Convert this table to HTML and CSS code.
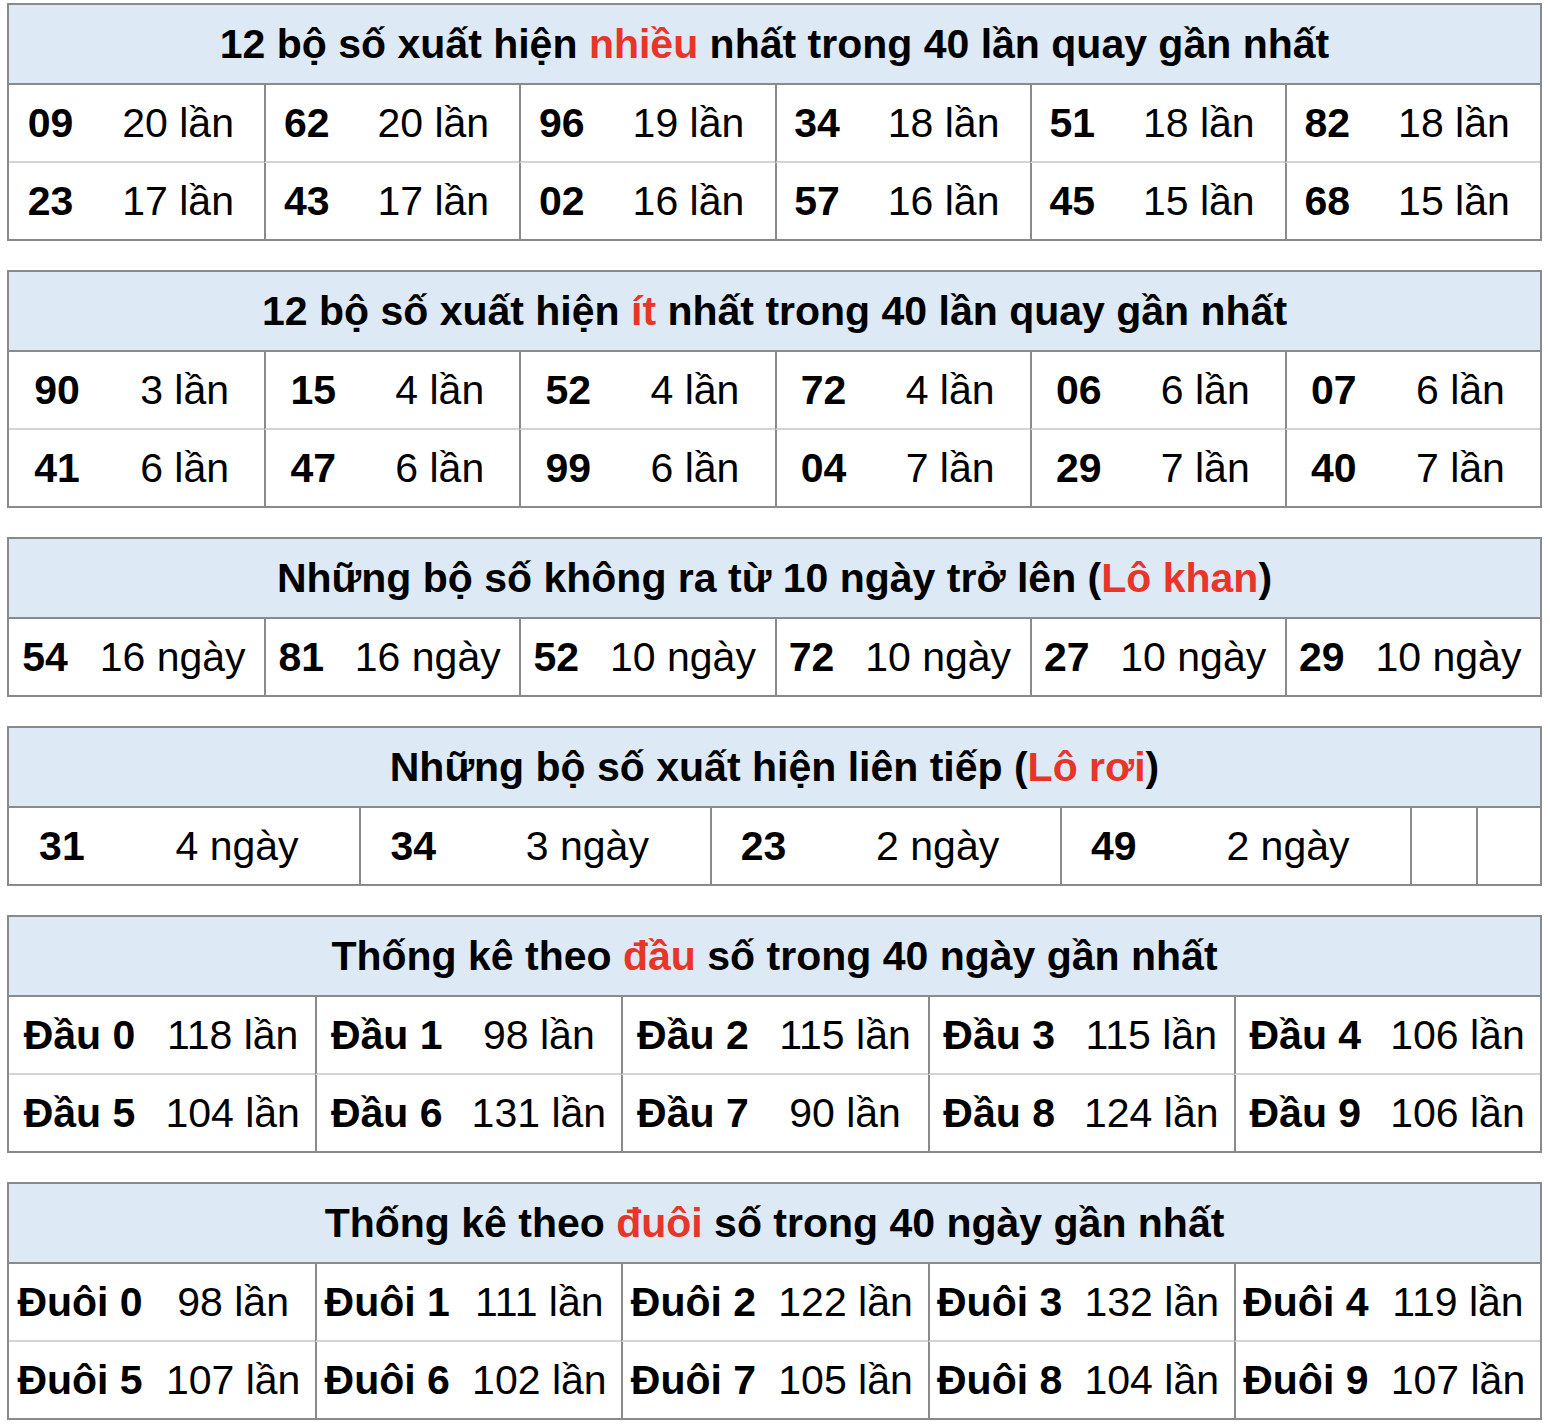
FILE: index.html
```html
<!DOCTYPE html>
<html lang="vi">
<head>
<meta charset="utf-8">
<title>Thống kê lô tô</title>
<link rel="stylesheet" href="styles.css">
</head>
<body>

<section class="tbl">
  <div class="head">12 bộ số xuất hiện <span class="red">nhiều</span> nhất trong 40 lần quay gần nhất</div>
  <div class="grid t1">
    <div class="row top">
      <div class="n">09</div><div class="v">20 lần</div>
      <div class="n g">62</div><div class="v">20 lần</div>
      <div class="n g">96</div><div class="v">19 lần</div>
      <div class="n g">34</div><div class="v">18 lần</div>
      <div class="n g">51</div><div class="v">18 lần</div>
      <div class="n g">82</div><div class="v">18 lần</div>
    </div>
    <div class="row">
      <div class="n">23</div><div class="v">17 lần</div>
      <div class="n g">43</div><div class="v">17 lần</div>
      <div class="n g">02</div><div class="v">16 lần</div>
      <div class="n g">57</div><div class="v">16 lần</div>
      <div class="n g">45</div><div class="v">15 lần</div>
      <div class="n g">68</div><div class="v">15 lần</div>
    </div>
  </div>
</section>

<section class="tbl">
  <div class="head">12 bộ số xuất hiện <span class="red">ít</span> nhất trong 40 lần quay gần nhất</div>
  <div class="grid t2">
    <div class="row top">
      <div class="n">90</div><div class="v">3 lần</div>
      <div class="n g">15</div><div class="v">4 lần</div>
      <div class="n g">52</div><div class="v">4 lần</div>
      <div class="n g">72</div><div class="v">4 lần</div>
      <div class="n g">06</div><div class="v">6 lần</div>
      <div class="n g">07</div><div class="v">6 lần</div>
    </div>
    <div class="row">
      <div class="n">41</div><div class="v">6 lần</div>
      <div class="n g">47</div><div class="v">6 lần</div>
      <div class="n g">99</div><div class="v">6 lần</div>
      <div class="n g">04</div><div class="v">7 lần</div>
      <div class="n g">29</div><div class="v">7 lần</div>
      <div class="n g">40</div><div class="v">7 lần</div>
    </div>
  </div>
</section>

<section class="tbl">
  <div class="head">Những bộ số không ra từ 10 ngày trở lên (<span class="red">Lô khan</span>)</div>
  <div class="grid t3">
    <div class="row">
      <div class="n">54</div><div class="v">16 ngày</div>
      <div class="n g">81</div><div class="v">16 ngày</div>
      <div class="n g">52</div><div class="v">10 ngày</div>
      <div class="n g">72</div><div class="v">10 ngày</div>
      <div class="n g">27</div><div class="v">10 ngày</div>
      <div class="n g">29</div><div class="v">10 ngày</div>
    </div>
  </div>
</section>

<section class="tbl">
  <div class="head">Những bộ số xuất hiện liên tiếp (<span class="red">Lô rơi</span>)</div>
  <div class="grid t4">
    <div class="row">
      <div class="n">31</div><div class="v">4 ngày</div>
      <div class="n g">34</div><div class="v">3 ngày</div>
      <div class="n g">23</div><div class="v">2 ngày</div>
      <div class="n g">49</div><div class="v">2 ngày</div>
      <div class="n g"></div><div class="v"></div>
      <div class="n g"></div><div class="v"></div>
    </div>
  </div>
</section>

<section class="tbl">
  <div class="head">Thống kê theo <span class="red">đầu</span> số trong 40 ngày gần nhất</div>
  <div class="grid t5">
    <div class="row top">
      <div class="n">Đầu 0</div><div class="v">118 lần</div>
      <div class="n g">Đầu 1</div><div class="v">98 lần</div>
      <div class="n g">Đầu 2</div><div class="v">115 lần</div>
      <div class="n g">Đầu 3</div><div class="v">115 lần</div>
      <div class="n g">Đầu 4</div><div class="v">106 lần</div>
    </div>
    <div class="row">
      <div class="n">Đầu 5</div><div class="v">104 lần</div>
      <div class="n g">Đầu 6</div><div class="v">131 lần</div>
      <div class="n g">Đầu 7</div><div class="v">90 lần</div>
      <div class="n g">Đầu 8</div><div class="v">124 lần</div>
      <div class="n g">Đầu 9</div><div class="v">106 lần</div>
    </div>
  </div>
</section>

<section class="tbl">
  <div class="head">Thống kê theo <span class="red">đuôi</span> số trong 40 ngày gần nhất</div>
  <div class="grid t6">
    <div class="row top">
      <div class="n">Đuôi 0</div><div class="v">98 lần</div>
      <div class="n g">Đuôi 1</div><div class="v">111 lần</div>
      <div class="n g">Đuôi 2</div><div class="v">122 lần</div>
      <div class="n g">Đuôi 3</div><div class="v">132 lần</div>
      <div class="n g">Đuôi 4</div><div class="v">119 lần</div>
    </div>
    <div class="row">
      <div class="n">Đuôi 5</div><div class="v">107 lần</div>
      <div class="n g">Đuôi 6</div><div class="v">102 lần</div>
      <div class="n g">Đuôi 7</div><div class="v">105 lần</div>
      <div class="n g">Đuôi 8</div><div class="v">104 lần</div>
      <div class="n g">Đuôi 9</div><div class="v">107 lần</div>
    </div>
  </div>
</section>

</body>
</html>
```
FILE: styles.css
```css
html, body {
  background: #ffffff;
}

body {
  margin: 3px 8px 0 7px;
  font-family: "Liberation Sans", Arial, Helvetica, sans-serif;
  font-size: 41px;
  color: #000000;
}

.tbl {
  border: 2px solid #8a8a8a;
  margin-bottom: 29px;
  box-sizing: border-box;
}

.head {
  background: #dde9f5;
  border-bottom: 2px solid #8a8a8a;
  text-align: center;
  font-weight: bold;
  line-height: 47px;
  padding: 16px 0 15px;
  white-space: nowrap;
}

.red {
  color: #e8352a;
}

.grid {
  display: grid;
}

.t1 { grid-template-columns: repeat(6, 83fr 172fr); }
.t2 { grid-template-columns: repeat(6, 96fr 159fr); }
.t3 { grid-template-columns: repeat(6, 72fr 183fr); }
.t4 { grid-template-columns: repeat(4, 106fr 245fr) 35fr 31fr 32fr 32fr; }
.t5 { grid-template-columns: repeat(5, 141fr 165fr); }
.t6 { grid-template-columns: repeat(5, 142fr 164fr); }

.row {
  display: contents;
}

.n, .v {
  text-align: center;
  line-height: 46px;
  height: 46px;
  padding: 15px 0;
  white-space: nowrap;
  background: #ffffff;
  min-width: 0;
}

.n {
  font-weight: bold;
}

.g {
  border-left: 2px solid #8a8a8a;
}

.row.top > .n,
.row.top > .v {
  border-bottom: 2px solid #d4d4d4;
}
```
